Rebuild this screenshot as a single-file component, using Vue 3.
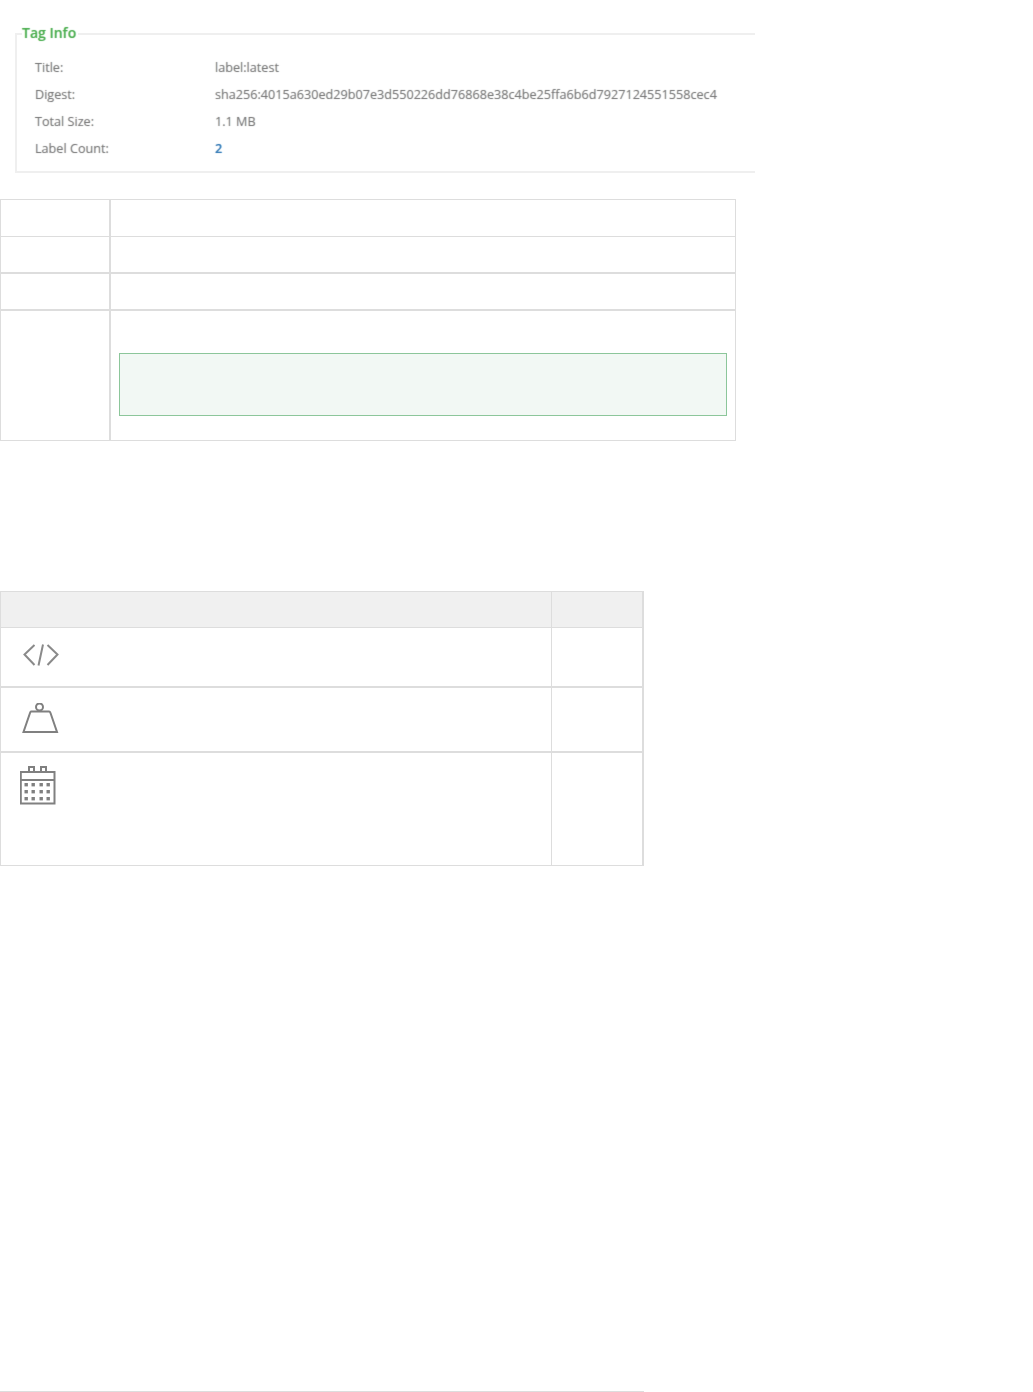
<script setup>
const info = [
  { label: 'Title:', value: 'label:latest' },
  { label: 'Digest:', value: 'sha256:4015a630ed29b07e3d550226dd76868e38c4be25ffa6b6d7927124551558cec4' },
  { label: 'Total Size:', value: '1.1 MB' },
  { label: 'Label Count:', value: '2', link: true }
]
</script>

<template>
  <main class="page">
    <fieldset class="tag-info">
      <legend>Tag Info</legend>
      <table class="info-table">
        <tbody>
          <tr v-for="row in info" :key="row.label">
            <td class="info-label">{{ row.label }}</td>
            <td :class="{ 'info-link': row.link }">{{ row.value }}</td>
          </tr>
        </tbody>
      </table>
    </fieldset>

    <table class="grid details">
      <tbody>
        <tr class="h37"><td class="side"></td><td></td></tr>
        <tr class="h36"><td class="side"></td><td></td></tr>
        <tr class="h37 thick"><td class="side"></td><td></td></tr>
        <tr class="last thick">
          <td class="side"></td>
          <td class="note-cell"><div class="note"></div></td>
        </tr>
      </tbody>
    </table>

    <table class="grid specs">
      <thead>
        <tr><th></th><th class="narrow"></th></tr>
      </thead>
      <tbody>
        <tr class="row-code">
          <td>
            <svg class="icon code" width="37" height="24" viewBox="0 0 37 24" fill="none" stroke="#8a8a8a" stroke-width="2">
              <path d="M11.500 2 1.500 11.500l10 10.500M24.500 2l10 9.500-10 10.500M20 1.500 15.500 22.500" />
            </svg>
          </td>
          <td></td>
        </tr>
        <tr class="row-weight thick">
          <td>
            <svg class="icon weight" width="37" height="32" viewBox="0 0 37 32" fill="none" stroke="#808080" stroke-width="2">
              <circle cx="17.500" cy="4" r="3.500" />
              <path d="M9 8.500H27Q28 8.500 28.500 10L35 29H1.500L8 10Q8.500 8.500 9 8.500Z" />
            </svg>
          </td>
          <td></td>
        </tr>
        <tr class="row-date thick">
          <td>
            <svg class="icon date" width="37" height="39" viewBox="0 0 37 39" fill="none" stroke="#808080" stroke-width="2">
              <path d="M.8 6H34.500V37.500H.8ZM.8 14H34.500M9 6V1h5V6M21 6V1h5V6" />
              <g fill="#808080" stroke="none">
                <g v-for="y in [17, 24, 31]" :key="y">
                  <rect v-for="x in [4.500, 11.500, 19.500, 26.500]" :key="x" :x="x" :y="y" width="3.400" height="3.400" />
                </g>
              </g>
            </svg>
          </td>
          <td></td>
        </tr>
      </tbody>
    </table>

    <div class="rule"></div>
  </main>
</template>

<style scoped>
.page {
  width: 1033px;
  height: 1392px;
  overflow: hidden;
  padding-top: 23px;
  box-sizing: border-box;
  background: #fff;
  font-family: "Open Sans", "Liberation Sans", sans-serif;
}

.tag-info {
  width: 740px;
  height: 150px;
  margin: 0 0 26px 15px;
  padding: 0;
  box-sizing: border-box;
  border: 2px solid #efefef;
  border-right: 0;
}

.tag-info legend {
  margin-left: 5px;
  padding: 0 2px 0 0;
  height: 22px;
  line-height: 19px;
  font-size: 14px;
  font-weight: 600;
  color: rgba(76, 175, 80, 0.3);
  text-shadow: 0 0 1px #4caf50;
}

.info-table {
  margin: 8px 0 0 18px;
  border-collapse: collapse;
  font-size: 12.650px;
  color: rgba(119, 119, 119, 0.25);
  text-shadow: 0 0 1px #777;
}

.info-table td {
  height: 27px;
  padding: 0;
  white-space: nowrap;
}

.info-table .info-label {
  width: 180px;
}

.info-table .info-link {
  color: rgba(51, 122, 183, 0.3);
  text-shadow: 0 0 1px #337ab7;
  font-weight: 600;
}

.grid {
  display: table;
  table-layout: fixed;
  border-collapse: collapse;
}

.grid td,
.grid th {
  padding: 0;
  border: 1px solid #ddd;
}

.grid .thick td {
  border-top-width: 2px;
}

.details {
  width: 736px;
  margin-bottom: 150px;
}

.details .side {
  width: 108px;
  border-right-width: 2px;
}

.details .h37 {
  height: 37px;
}

.details .h36 {
  height: 36px;
}

.details .last {
  height: 131px;
}

.note-cell {
  vertical-align: top;
}

.note {
  height: 63px;
  margin: 42px 8px 0;
  box-sizing: border-box;
  border: 1px solid #8cc69a;
  background: #f2f8f4;
}

.specs {
  width: 644px;
  margin-bottom: 525px;
}

.specs th {
  height: 35px;
  background: #f0f0f0;
}

.specs .narrow {
  width: 90px;
}

.specs td {
  vertical-align: top;
}

.specs th:last-child,
.specs td:last-child {
  border-right-width: 2px;
}

.icon {
  display: block;
}

.row-code {
  height: 59px;
}

.row-weight {
  height: 65px;
}

.row-date {
  height: 114px;
}

.code {
  margin: 15px 0 0 22px;
}

.weight {
  margin: 15px 0 0 21px;
}

.date {
  margin: 13px 0 0 19px;
}

.rule {
  width: 644px;
  height: 1px;
  background: #ddd;
}
</style>
